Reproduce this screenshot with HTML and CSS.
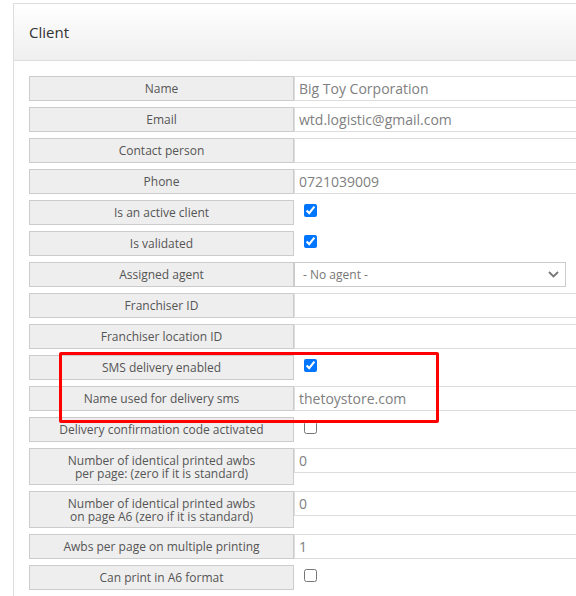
FILE: index.html
```html
<!DOCTYPE html>
<html>
<head>
<meta charset="utf-8">
<link rel="stylesheet" href="styles.css">
</head>
<body>
<div class="card">
  <div class="card-header">Client</div>
  <div class="card-body">
    <div class="row"><div class="label">Name</div><div class="value"><input class="field" type="text" value="Big Toy Corporation"></div></div>
    <div class="row"><div class="label">Email</div><div class="value"><input class="field" type="text" value="wtd.logistic@gmail.com"></div></div>
    <div class="row"><div class="label">Contact person</div><div class="value"><input class="field" type="text" value=""></div></div>
    <div class="row"><div class="label">Phone</div><div class="value"><input class="field" type="text" value="0721039009"></div></div>
    <div class="row"><div class="label">Is an active client</div><div class="value check"><input type="checkbox" checked></div></div>
    <div class="row"><div class="label">Is validated</div><div class="value check"><input type="checkbox" checked></div></div>
    <div class="row"><div class="label">Assigned agent</div><div class="value"><div class="select"><span>- No agent -</span><svg class="chev" width="11" height="7" viewBox="0 0 11 7"><path d="M1 1 L5.5 5.5 L10 1" fill="none" stroke="#777" stroke-width="1.8"/></svg></div></div></div>
    <div class="row"><div class="label">Franchiser ID</div><div class="value"><input class="field" type="text" value=""></div></div>
    <div class="row"><div class="label">Franchiser location ID</div><div class="value"><input class="field" type="text" value=""></div></div>
    <div class="row"><div class="label">SMS delivery enabled</div><div class="value check"><input type="checkbox" checked></div></div>
    <div class="row"><div class="label">Name used for delivery sms</div><div class="value"><input class="field" type="text" value="thetoystore.com"></div></div>
    <div class="row"><div class="label">Delivery confirmation code activated</div><div class="value check"><input type="checkbox"></div></div>
    <div class="row"><div class="label tall">Number of identical printed awbs<br>per page: (zero if it is standard)</div><div class="value"><input class="field" type="text" value="0"></div></div>
    <div class="row"><div class="label tall">Number of identical printed awbs<br>on page A6 (zero if it is standard)</div><div class="value"><input class="field" type="text" value="0"></div></div>
    <div class="row"><div class="label">Awbs per page on multiple printing</div><div class="value"><input class="field" type="text" value="1"></div></div>
    <div class="row"><div class="label">Can print in A6 format</div><div class="value check"><input type="checkbox"></div></div>
  </div>
</div>
<div class="highlight"></div>
</body>
</html>
```

FILE: styles.css
```css
html, body {
  margin: 0;
  padding: 0;
  background: #fff;
  overflow: hidden;
}
body {
  font-family: "Open Sans", "Liberation Sans", sans-serif;
  position: relative;
  width: 576px;
  height: 596px;
}
.card {
  margin: 3px 0 0 13px;
  width: 640px;
  border: 1px solid #ddd;
  background: #fff;
}
.card-header {
  height: 56px;
  padding-left: 15px;
  display: flex;
  align-items: center;
  font-size: 15px;
  color: #333;
  background: linear-gradient(#ffffff, #efefef);
  border-bottom: 1px solid #ddd;
}
.card-body {
  padding: 15px 0 0 15px;
}
.row {
  display: flex;
  align-items: flex-start;
  margin-bottom: 6px;
}
.label {
  box-sizing: border-box;
  width: 265px;
  height: 25px;
  flex: none;
  border: 1px solid #ccc;
  background: #eee;
  color: #555;
  font-size: 12px;
  display: flex;
  align-items: center;
  justify-content: center;
  text-align: center;
  line-height: 13px;
}
.label.tall {
  height: 37px;
}
.value {
  flex: 1;
  height: 25px;
}
.field {
  box-sizing: border-box;
  display: block;
  width: 100%;
  height: 25px;
  margin: 0;
  border: 1px solid #ddd;
  padding: 0 4px;
  font-family: "Open Sans", "Liberation Sans", sans-serif;
  font-size: 14px;
  color: #808080;
  background: #fff;
  outline: none;
}
.check input {
  margin: 4px 0 0 10px;
  width: 13px;
  height: 13px;
}
.select {
  box-sizing: border-box;
  width: 272px;
  height: 25px;
  border: 1px solid #ccc;
  display: flex;
  align-items: center;
  justify-content: space-between;
  padding: 0 6px 0 8px;
  font-size: 12px;
  color: #777;
}
.chev {
  display: block;
}
.highlight {
  position: absolute;
  left: 59px;
  top: 352px;
  width: 380px;
  height: 71px;
  box-sizing: border-box;
  border: 3px solid #f00;
  border-radius: 2px;
}
```
